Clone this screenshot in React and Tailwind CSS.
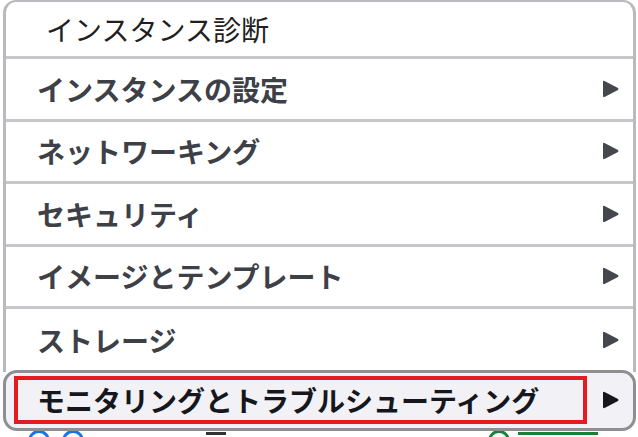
import React from 'react';

const items = [
  'インスタンスの設定',
  'ネットワーキング',
  'セキュリティ',
  'イメージとテンプレート',
  'ストレージ',
];

function Arrow({ dark }) {
  return (
    <svg viewBox="0 0 16 18" className="h-[18px] w-[16px] shrink-0">
      <path
        d="M1.5 1 L15 8.1 Q16 9 15 9.9 L1.5 17 Q0 17.6 0 16 V2 Q0 0.4 1.5 1 Z"
        fill={dark ? '#15171c' : '#45474e'}
      />
    </svg>
  );
}

export default function App() {
  return (
    <div
      className="relative w-[638px] h-[437px] overflow-hidden bg-white"
      style={{ fontFamily: '"Noto Sans CJK JP", "Noto Sans", sans-serif' }}
    >
      {/* page behind the menu */}
      <div className="flex h-full flex-col justify-end">
        <div className="flex h-[9px] items-start gap-3 pl-[28px]">
          <div className="mt-[2px] h-[22px] w-[22px] shrink-0 rounded-full border-[3px] border-[#1a73e8]" />
          <div className="mt-[2px] h-[22px] w-[22px] shrink-0 rounded-full border-[3px] border-[#1a73e8]" />
          <div className="ml-[110px] mt-[4px] h-[3px] w-[20px] bg-[#333]" />
          <div className="ml-auto mr-[40px] flex gap-2">
            <div className="mt-[2px] h-[22px] w-[22px] rounded-full border-[3px] border-[#188038]" />
            <div className="mt-[4px] h-[3px] w-[80px] bg-[#188038]" />
          </div>
        </div>
      </div>

      {/* popover menu */}
      <div className="absolute left-[3px] top-0 w-[633px]">
        <div className="rounded-t-[13px] border-x-[3px] border-t-2 border-[#b9b9be] bg-white">
          <div className="flex h-[57px] items-center border-b-[3px] border-[#c6c6cb] pl-[40px] text-[28px] text-[#1f1f22]">
            インスタンス診断
          </div>
          {items.map((label) => (
            <div
              key={label}
              className="flex h-[62.5px] items-center justify-between border-b-[3px] border-[#c6c6cb] pl-[31px] pr-[14px] text-[28px] font-bold text-[#3d4047] last:border-b-0"
            >
              <span>{label}</span>
              <Arrow />
            </div>
          ))}
        </div>
        <div className="-mt-[2px] flex h-[61px] items-center justify-between rounded-[14px] border-[3px] border-[#8e8e93] bg-[#f1f1f6] pl-[8px] pr-[14px]">
          <div className="flex h-[48px] w-[573px] items-center border-4 border-[#e31b23] pl-[19px] text-[28px] font-bold text-[#15171c]">
            モニタリングとトラブルシューティング
          </div>
          <Arrow dark />
        </div>
      </div>
    </div>
  );
}
